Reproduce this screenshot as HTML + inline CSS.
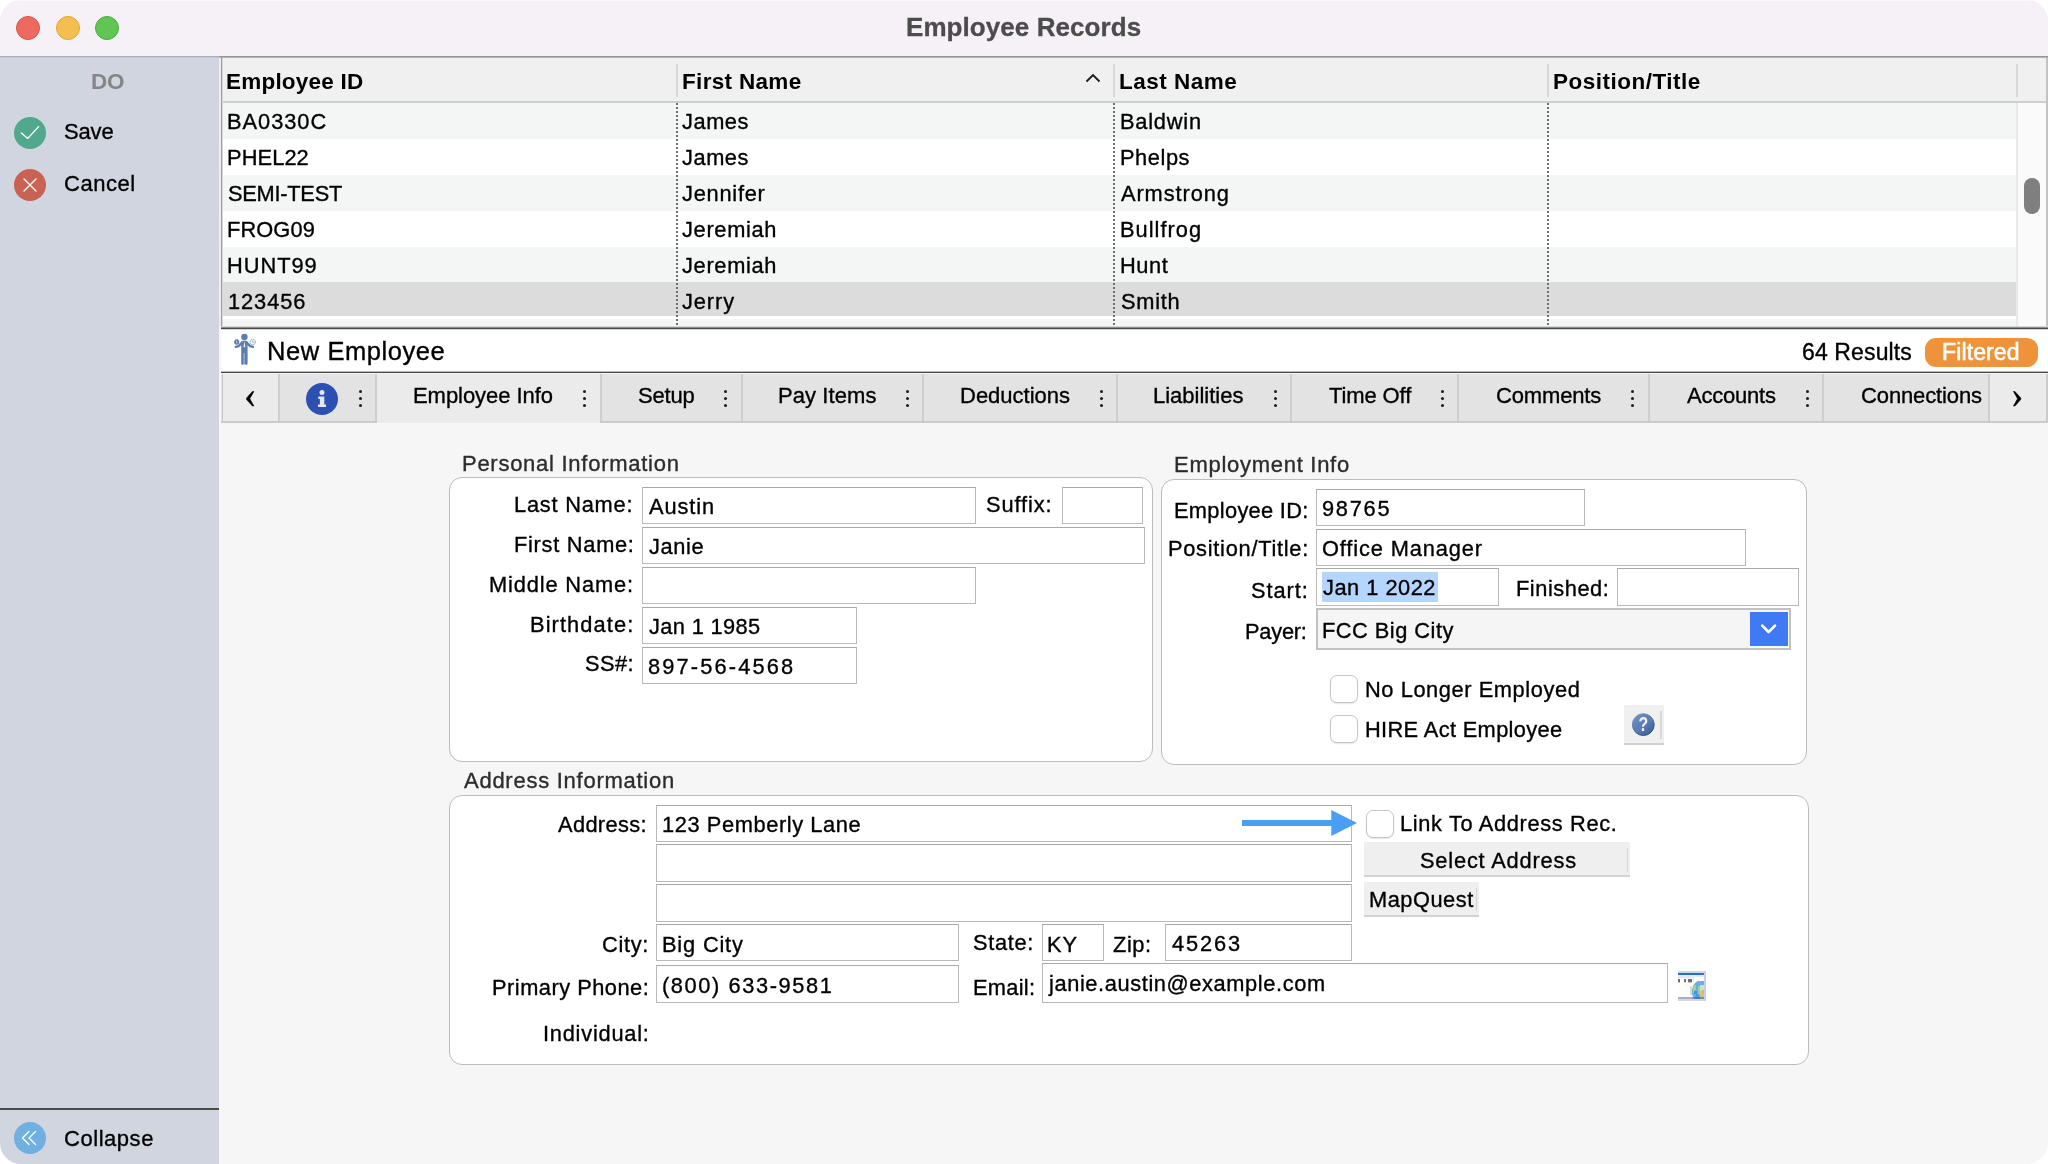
<!DOCTYPE html>
<html>
<head>
<meta charset="utf-8">
<title>Employee Records</title>
<style>
html,body{margin:0;padding:0;background:#fff;}
body{width:2048px;height:1164px;overflow:hidden;position:relative;font-family:"Liberation Sans",sans-serif;color:#000;}
#win{position:absolute;left:0;top:0;width:2048px;height:1164px;border-radius:21px;overflow:hidden;background:#f6f6f6;}
.abs{position:absolute;box-sizing:border-box;}
.t{position:absolute;white-space:nowrap;line-height:1;will-change:transform;-webkit-font-smoothing:antialiased;-webkit-text-stroke:0.35px;}
.tl{position:absolute;top:16px;width:24px;height:24px;border-radius:50%;box-sizing:border-box;}
.circ{position:absolute;width:32px;height:32px;border-radius:50%;}
.inp{position:absolute;box-sizing:border-box;border:1px solid #b9b9b9;border-top-color:#a9a9a9;background:#fff;}
.grp{position:absolute;box-sizing:border-box;border:1.5px solid #bcbcbc;border-radius:13px;background:#fff;}
.cb{position:absolute;box-sizing:border-box;width:28px;height:28px;border:1px solid #c6c6c6;border-radius:7px;background:#fff;box-shadow:0 1px 1.5px rgba(0,0,0,0.10);}
.btn{position:absolute;box-sizing:border-box;background:#efefef;border-bottom:2px solid #d2d2d2;}
.dots{position:absolute;width:3px;height:3px;background:#1e1e1e;border-radius:50%;box-shadow:0 7px 0 #1e1e1e,0 14px 0 #1e1e1e;top:390px;}
.tabb{position:absolute;top:374px;width:2px;height:47px;background:#cecece;}
.vdot{position:absolute;top:103px;width:0;height:222px;border-left:2px dotted #707070;}
.hsep{position:absolute;top:64px;width:2px;height:33px;background:#d8d8d8;}
</style>
</head>
<body>
<div id="win">
<div class="abs" style="left:0px;top:0px;width:2048px;height:56px;background:#f6f1f7;border-top:1px solid #fbf9fb;"></div>
<div class="tl" style="left:16px;background:#ec6a5f;border:1px solid #d9574c;"></div>
<div class="tl" style="left:56px;background:#f5bf4f;border:1px solid #dca73a;"></div>
<div class="tl" style="left:95px;background:#61c554;border:1px solid #4eaa41;"></div>
<div class="t" style="left:905.67px;top:14.00px;font-size:26px;letter-spacing:0.07px;font-weight:bold;-webkit-text-stroke:0;color:#4c4c4c;-webkit-text-stroke:0.3px;">Employee Records</div>
<div class="abs" style="left:0px;top:56px;width:2048px;height:1px;background:#959595;"></div>
<div class="abs" style="left:0px;top:57px;width:2048px;height:1px;background:#b4b4b4;"></div>
<div class="abs" style="left:0px;top:56px;width:219px;height:1.5px;background:#adb0ba;"></div>
<div class="abs" style="left:0px;top:57px;width:219px;height:1px;background:#c4c8d2;"></div>
<div class="abs" style="left:0px;top:58px;width:219px;height:1106px;background:#d1d5df;"></div>
<div class="abs" style="left:219px;top:58px;width:2px;height:270px;background:#eeeeee;"></div>
<div class="t" style="left:91.10px;top:71.00px;font-size:22.5px;letter-spacing:-0.27px;font-weight:bold;-webkit-text-stroke:0;color:#858585;">DO</div>
<div class="circ" style="left:14px;top:117px;background:#52a88c;"><svg width="32" height="32" viewBox="0 0 32 32"><path d="M7.4 16 L13.8 21.4 L24.6 9.6" fill="none" stroke="#fff" stroke-width="1.35" stroke-linecap="round" stroke-linejoin="round"/></svg></div>
<div class="t" style="left:63.80px;top:121.00px;font-size:22px;letter-spacing:-0.15px;">Save</div>
<div class="circ" style="left:14px;top:169px;background:#c96253;"><svg width="32" height="32" viewBox="0 0 32 32"><path d="M10 10 L22 22 M22 10 L10 22" fill="none" stroke="#fff" stroke-width="1.35" stroke-linecap="round"/></svg></div>
<div class="t" style="left:63.80px;top:173.00px;font-size:22px;letter-spacing:0.53px;">Cancel</div>
<div class="abs" style="left:0px;top:1108px;width:219px;height:2px;background:#4a4a4a;"></div>
<div class="circ" style="left:14px;top:1122px;background:#6fb0e0;"><svg width="32" height="32" viewBox="0 0 32 32"><path d="M15 9.5 L8.5 16 L15 22.5 M21.5 9.5 L15 16 L21.5 22.5" fill="none" stroke="#fff" stroke-width="1.25" stroke-linecap="round" stroke-linejoin="round"/></svg></div>
<div class="t" style="left:63.80px;top:1128.00px;font-size:22px;letter-spacing:0.54px;">Collapse</div>
<div class="abs" style="left:221px;top:58px;width:1827px;height:270px;background:#fff;"></div>
<div class="abs" style="left:221px;top:58px;width:1827px;height:45px;background:#f0f0f0;border-bottom:2px solid #cfcfcf;"></div>
<div class="abs" style="left:222px;top:103px;width:1794px;height:36px;background:#f4f5f5;"></div>
<div class="abs" style="left:222px;top:175px;width:1794px;height:36px;background:#f4f5f5;"></div>
<div class="abs" style="left:222px;top:247px;width:1794px;height:36px;background:#f4f5f5;"></div>
<div class="abs" style="left:222px;top:282px;width:1794px;height:34px;background:#dcdcdc;"></div>
<div class="abs" style="left:222px;top:319px;width:1794px;height:8px;background:#f4f5f5;"></div>
<div class="abs" style="left:2016px;top:103px;width:30px;height:225px;background:#fafafa;border-left:2px solid #e9e9e9;"></div>
<div class="abs" style="left:2024px;top:177.5px;width:16px;height:36.0px;background:#7f7f7f;border-radius:8px;"></div>
<div class="abs" style="left:221px;top:58px;width:1px;height:270px;background:#9d9d9d;"></div>
<div class="abs" style="left:222px;top:58px;width:1px;height:270px;background:#d9d9d9;"></div>
<div class="abs" style="left:2046px;top:58px;width:2px;height:270px;background:#c2c2c2;"></div>
<div class="vdot" style="left:676px;"></div>
<div class="vdot" style="left:1113px;"></div>
<div class="vdot" style="left:1547px;"></div>
<div class="hsep" style="left:676px;"></div>
<div class="hsep" style="left:1113px;"></div>
<div class="hsep" style="left:1547px;"></div>
<div class="hsep" style="left:2016px;"></div>
<svg class="abs" style="left:1084px;top:72px;" width="18" height="12" viewBox="0 0 18 12"><path d="M2.5 9.5 L9 3 L15.5 9.5" fill="none" stroke="#1a1a1a" stroke-width="1.8"/></svg>
<div class="t" style="left:226.10px;top:71.00px;font-size:22.5px;letter-spacing:0.21px;font-weight:bold;-webkit-text-stroke:0;">Employee ID</div>
<div class="t" style="left:682.10px;top:71.00px;font-size:22.5px;letter-spacing:0.32px;font-weight:bold;-webkit-text-stroke:0;">First Name</div>
<div class="t" style="left:1119.00px;top:71.00px;font-size:22.5px;letter-spacing:0.50px;font-weight:bold;-webkit-text-stroke:0;">Last Name</div>
<div class="t" style="left:1553.00px;top:71.00px;font-size:22.5px;letter-spacing:0.49px;font-weight:bold;-webkit-text-stroke:0;">Position/Title</div>
<div class="t" style="left:226.75px;top:111.00px;font-size:21.8px;letter-spacing:0.98px;">BA0330C</div>
<div class="t" style="left:682.35px;top:111.00px;font-size:21.8px;letter-spacing:0.56px;">James</div>
<div class="t" style="left:1119.75px;top:111.00px;font-size:21.8px;letter-spacing:0.78px;">Baldwin</div>
<div class="t" style="left:226.75px;top:147.00px;font-size:21.8px;letter-spacing:0.11px;">PHEL22</div>
<div class="t" style="left:682.35px;top:147.00px;font-size:21.8px;letter-spacing:0.56px;">James</div>
<div class="t" style="left:1119.75px;top:147.00px;font-size:21.8px;letter-spacing:0.57px;">Phelps</div>
<div class="t" style="left:227.62px;top:183.00px;font-size:21.8px;letter-spacing:-0.25px;">SEMI-TEST</div>
<div class="t" style="left:682.35px;top:183.00px;font-size:21.8px;letter-spacing:0.76px;">Jennifer</div>
<div class="t" style="left:1121.00px;top:183.00px;font-size:21.8px;letter-spacing:0.91px;">Armstrong</div>
<div class="t" style="left:226.75px;top:219.00px;font-size:21.8px;letter-spacing:0.11px;">FROG09</div>
<div class="t" style="left:682.35px;top:219.00px;font-size:21.8px;letter-spacing:0.69px;">Jeremiah</div>
<div class="t" style="left:1119.75px;top:219.00px;font-size:21.8px;letter-spacing:1.03px;">Bullfrog</div>
<div class="t" style="left:226.85px;top:255.00px;font-size:21.8px;letter-spacing:0.99px;">HUNT99</div>
<div class="t" style="left:682.35px;top:255.00px;font-size:21.8px;letter-spacing:0.69px;">Jeremiah</div>
<div class="t" style="left:1119.75px;top:255.00px;font-size:21.8px;letter-spacing:0.59px;">Hunt</div>
<div class="t" style="left:227.87px;top:291.00px;font-size:21.8px;letter-spacing:0.94px;">123456</div>
<div class="t" style="left:682.35px;top:291.00px;font-size:21.8px;letter-spacing:0.92px;">Jerry</div>
<div class="t" style="left:1120.62px;top:291.00px;font-size:21.8px;letter-spacing:0.75px;">Smith</div>
<div class="abs" style="left:221px;top:326px;width:1827px;height:1px;background:#d8d8d8;"></div>
<div class="abs" style="left:221px;top:327px;width:1827px;height:1px;background:#8c8c8c;"></div>
<div class="abs" style="left:221px;top:328px;width:1827px;height:1px;background:#4a4a4a;"></div>
<div class="abs" style="left:221px;top:329px;width:1827px;height:1px;background:#d4d4d4;"></div>
<div class="abs" style="left:221px;top:330px;width:1827px;height:41px;background:#fff;"></div>
<svg class="abs" style="left:232px;top:332px;" width="26" height="34" viewBox="0 0 26 34"><circle cx="12.4" cy="4.9" r="3.25" fill="#5d7eac"/><path d="M10.6 10.2 L6.6 14.2 L3.9 14.9 M14.2 10.2 L18.2 14.2 L20.9 14.9" fill="none" stroke="#5d7eac" stroke-width="2.4" stroke-linecap="round" stroke-linejoin="round"/><path d="M9.2 11 Q9.2 8.7 11 8.7 L13.8 8.7 Q15.6 8.7 15.6 11 L15.6 31.6 Q15.6 32.9 14.3 32.9 Q13 32.9 13 31.6 L13 21.5 L11.8 21.5 L11.8 31.6 Q11.8 32.9 10.5 32.9 Q9.2 32.9 9.2 31.6 Z" fill="#5d7eac"/><rect x="11.8" y="21.5" width="1.2" height="11" fill="#8da3c6"/><path d="M12.4 9.3 L13.15 14.2 L12.4 15.8 L11.65 14.2 Z" fill="#fff"/><circle cx="4.7" cy="10.1" r="2.6" fill="#5d7eac"/><path d="M3.2 6.6 L4.7 8 L6.2 6.6 L5.4 8.4 L4 8.4 Z" fill="#5d7eac"/><path d="M4.9 8.8 Q3.9 10 4.9 11.4" fill="none" stroke="#dfe6f1" stroke-width="0.8"/><circle cx="20.7" cy="10.1" r="2.7" fill="#f3f6fb" stroke="#7f9bc6" stroke-width="0.9" stroke-dasharray="1.6 0.5"/><path d="M20.7 8.7 L20.7 10.3 L21.7 10.3" fill="none" stroke="#7f9bc6" stroke-width="0.7"/></svg>
<div class="t" style="left:267.10px;top:339.00px;font-size:25.5px;letter-spacing:0.57px;">New Employee</div>
<div class="t" style="left:1801.58px;top:341.00px;font-size:23px;letter-spacing:0.13px;">64 Results</div>
<div class="abs" style="left:1925px;top:338px;width:113px;height:29px;background:#ef933a;border-radius:11px;"></div>
<div class="t" style="left:1941.53px;top:341.00px;font-size:23px;letter-spacing:0.12px;color:#fff;-webkit-text-stroke:0.6px;">Filtered</div>
<div class="abs" style="left:221px;top:371px;width:1827px;height:1px;background:#b8b8b8;"></div>
<div class="abs" style="left:221px;top:372px;width:1827px;height:1px;background:#484848;"></div>
<div class="abs" style="left:221px;top:373.5px;width:1827px;height:49.5px;background:#e3e3e3;border-bottom:2px solid #cbcbcb;"></div>
<div class="abs" style="left:222px;top:373.5px;width:57px;height:47.5px;background:#ebebeb;border-left:1px solid #c6c6c6;"></div>
<div class="abs" style="left:377px;top:373.5px;width:223px;height:49.5px;background:#ebebeb;"></div>
<div class="abs" style="left:1989px;top:373.5px;width:59px;height:47.5px;background:#ebebeb;border-right:2px solid #cbcbcb;"></div>
<div class="tabb" style="left:278px;"></div>
<div class="tabb" style="left:375px;"></div>
<div class="tabb" style="left:600px;"></div>
<div class="tabb" style="left:741px;"></div>
<div class="tabb" style="left:922px;"></div>
<div class="tabb" style="left:1116px;"></div>
<div class="tabb" style="left:1290px;"></div>
<div class="tabb" style="left:1457px;"></div>
<div class="tabb" style="left:1648px;"></div>
<div class="tabb" style="left:1822px;"></div>
<div class="tabb" style="left:1988px;"></div>
<div class="t" style="left:244.4px;top:376.4px;font-size:37px;font-family:'Liberation Serif',serif;-webkit-text-stroke:0.45px;">‹</div>
<div class="t" style="left:2011.3px;top:376.4px;font-size:37px;font-family:'Liberation Serif',serif;-webkit-text-stroke:0.45px;">›</div>
<svg class="abs" style="left:306px;top:383px;" width="32" height="32" viewBox="0 0 32 32"><circle cx="16" cy="16" r="16" fill="#2b50b1"/><circle cx="16" cy="9.6" r="2.5" fill="#e6e6e6"/><path d="M12.3 13.6 L18.3 13.6 L18.3 21.6 L20 21.6 L20 24 L12 24 L12 21.6 L13.9 21.6 L13.9 15.9 L12.3 15.9 Z" fill="#e6e6e6"/></svg>
<div class="dots" style="left:358.5px;"></div>
<div class="dots" style="left:582.5px;"></div>
<div class="dots" style="left:724.2px;"></div>
<div class="dots" style="left:905.9px;"></div>
<div class="dots" style="left:1099.5px;"></div>
<div class="dots" style="left:1273.5px;"></div>
<div class="dots" style="left:1440.5px;"></div>
<div class="dots" style="left:1630.5px;"></div>
<div class="dots" style="left:1805.5px;"></div>
<div class="t" style="left:412.85px;top:385.00px;font-size:22px;letter-spacing:-0.05px;">Employee Info</div>
<div class="t" style="left:637.50px;top:385.00px;font-size:22px;letter-spacing:-0.16px;">Setup</div>
<div class="t" style="left:777.75px;top:385.00px;font-size:22px;letter-spacing:0.08px;">Pay Items</div>
<div class="t" style="left:959.75px;top:385.00px;font-size:22px;letter-spacing:-0.01px;">Deductions</div>
<div class="t" style="left:1153.25px;top:385.00px;font-size:22px;">Liabilities</div>
<div class="t" style="left:1328.62px;top:385.00px;font-size:22px;letter-spacing:-0.12px;">Time Off</div>
<div class="t" style="left:1496.00px;top:385.00px;font-size:22px;letter-spacing:-0.16px;">Comments</div>
<div class="t" style="left:1687.20px;top:385.00px;font-size:22px;letter-spacing:-0.21px;">Accounts</div>
<div class="t" style="left:1860.70px;top:385.00px;font-size:22px;letter-spacing:-0.12px;">Connections</div>
<div class="t" style="left:462.35px;top:453.00px;font-size:22px;letter-spacing:0.73px;color:#2c2c2c;">Personal Information</div>
<div class="t" style="left:1174.15px;top:454.00px;font-size:22px;letter-spacing:0.72px;color:#2c2c2c;">Employment Info</div>
<div class="t" style="left:463.90px;top:770.00px;font-size:22px;letter-spacing:0.74px;color:#2c2c2c;">Address Information</div>
<div class="grp" style="left:449px;top:476.5px;width:704px;height:285.5px;"></div>
<div class="grp" style="left:1161px;top:478.5px;width:646px;height:286px;"></div>
<div class="grp" style="left:449px;top:794.5px;width:1360px;height:270px;"></div>
<div class="inp" style="left:642px;top:487px;width:334px;height:37px;"></div>
<div class="inp" style="left:1062px;top:487px;width:81px;height:37px;"></div>
<div class="inp" style="left:642px;top:527px;width:503px;height:37px;"></div>
<div class="inp" style="left:642px;top:567px;width:334px;height:37px;"></div>
<div class="inp" style="left:642px;top:607px;width:215px;height:37px;"></div>
<div class="inp" style="left:642px;top:647px;width:215px;height:37px;"></div>
<div class="t" style="left:514.45px;top:494.00px;font-size:21.8px;letter-spacing:0.78px;">Last Name:</div>
<div class="t" style="left:514.45px;top:534.00px;font-size:21.8px;letter-spacing:0.73px;">First Name:</div>
<div class="t" style="left:488.85px;top:574.00px;font-size:21.8px;letter-spacing:0.87px;">Middle Name:</div>
<div class="t" style="left:530.25px;top:614.00px;font-size:21.8px;letter-spacing:1.10px;">Birthdate:</div>
<div class="t" style="left:584.72px;top:653.00px;font-size:21.8px;letter-spacing:0.47px;">SS#:</div>
<div class="t" style="left:986.12px;top:494.00px;font-size:21.8px;letter-spacing:0.90px;">Suffix:</div>
<div class="t" style="left:648.80px;top:496.00px;font-size:21.8px;letter-spacing:0.89px;">Austin</div>
<div class="t" style="left:648.55px;top:536.00px;font-size:21.8px;letter-spacing:0.65px;">Janie</div>
<div class="t" style="left:648.55px;top:616.00px;font-size:21.8px;letter-spacing:0.37px;">Jan 1 1985</div>
<div class="t" style="left:647.92px;top:656.00px;font-size:21.8px;letter-spacing:2.15px;">897-56-4568</div>
<div class="inp" style="left:1316px;top:489px;width:269px;height:37px;"></div>
<div class="inp" style="left:1316px;top:528.5px;width:430px;height:37.0px;"></div>
<div class="inp" style="left:1316px;top:568px;width:183px;height:37.5px;"></div>
<div class="inp" style="left:1616.5px;top:568px;width:182.5px;height:37.5px;"></div>
<div class="abs" style="left:1316px;top:608px;width:475px;height:42px;background:#f5f5f5;border:2px solid #c1c1c1;"></div>
<div class="abs" style="left:1750px;top:612px;width:39px;height:36px;background:#fdfdf8;"></div>
<div class="abs" style="left:1750px;top:612px;width:38px;height:34px;background:#3f79f3;"><svg width="38" height="34" viewBox="0 0 38 34" style="display:block"><path d="M12.2 13.6 L18.6 20 L25 13.6" fill="none" stroke="#fff" stroke-width="2.7" stroke-linecap="round" stroke-linejoin="round"/></svg></div>
<div class="t" style="left:1173.75px;top:500.00px;font-size:21.8px;letter-spacing:0.32px;">Employee ID:</div>
<div class="t" style="left:1168.15px;top:538.00px;font-size:21.8px;letter-spacing:0.73px;">Position/Title:</div>
<div class="t" style="left:1250.82px;top:580.00px;font-size:21.8px;letter-spacing:0.93px;">Start:</div>
<div class="t" style="left:1245.45px;top:621.00px;font-size:21.8px;letter-spacing:-0.22px;">Payer:</div>
<div class="t" style="left:1515.75px;top:578.00px;font-size:21.8px;letter-spacing:0.55px;">Finished:</div>
<div class="t" style="left:1322.30px;top:498.00px;font-size:21.8px;letter-spacing:1.74px;">98765</div>
<div class="t" style="left:1322.30px;top:538.00px;font-size:21.8px;letter-spacing:0.87px;">Office Manager</div>
<div class="abs" style="left:1322px;top:572px;width:116px;height:30px;background:#b4d5fe;"></div>
<div class="t" style="left:1323.05px;top:577.00px;font-size:21.8px;letter-spacing:0.51px;">Jan 1 2022</div>
<div class="t" style="left:1321.55px;top:620.00px;font-size:21.8px;letter-spacing:0.49px;">FCC Big City</div>
<div class="cb" style="left:1330px;top:675px;"></div>
<div class="cb" style="left:1330px;top:715px;"></div>
<div class="t" style="left:1365.05px;top:679.00px;font-size:21.8px;letter-spacing:0.59px;">No Longer Employed</div>
<div class="t" style="left:1365.05px;top:719.00px;font-size:21.8px;letter-spacing:0.36px;">HIRE Act Employee</div>
<div class="abs" style="left:1624px;top:705px;width:40px;height:40px;background:#f0f0f0;border-bottom:2px solid #d0d0d0;"></div>
<div class="abs" style="left:1660px;top:711px;width:2px;height:28px;background:#d9d9d9;"></div>
<svg class="abs" style="left:1630px;top:711px;will-change:transform;" width="28" height="28" viewBox="0 0 28 28"><defs><linearGradient id="hg" x1="0.15" y1="0.1" x2="0.85" y2="0.95"><stop offset="0" stop-color="#6a8dc2"/><stop offset="0.55" stop-color="#587bb3"/><stop offset="1" stop-color="#3e5f98"/></linearGradient><linearGradient id="hs" x1="0.2" y1="0" x2="0.8" y2="1"><stop offset="0" stop-color="#7d9ccc"/><stop offset="1" stop-color="#263f6e"/></linearGradient></defs><circle cx="13.3" cy="13.6" r="10.9" fill="url(#hg)" stroke="url(#hs)" stroke-width="1"/><text x="13.4" y="20.4" text-anchor="middle" font-family="Liberation Sans, sans-serif" font-weight="bold" font-size="19.5" fill="#f4f2ec" transform="translate(2.55,0) scale(0.81,1)">?</text></svg>
<div class="inp" style="left:656px;top:805px;width:696px;height:37px;"></div>
<div class="inp" style="left:656px;top:844px;width:696px;height:38px;"></div>
<div class="inp" style="left:656px;top:884px;width:696px;height:37.5px;"></div>
<div class="inp" style="left:656px;top:924px;width:302.5px;height:37px;"></div>
<div class="inp" style="left:1042px;top:924px;width:62px;height:37px;"></div>
<div class="inp" style="left:1165px;top:924px;width:187px;height:37px;"></div>
<div class="inp" style="left:656px;top:965px;width:302.5px;height:37.5px;"></div>
<div class="inp" style="left:1042px;top:963px;width:626px;height:40px;"></div>
<div class="t" style="left:557.60px;top:814.00px;font-size:21.8px;letter-spacing:0.36px;">Address:</div>
<div class="t" style="left:601.60px;top:934.00px;font-size:21.8px;letter-spacing:0.67px;">City:</div>
<div class="t" style="left:491.85px;top:977.00px;font-size:21.8px;letter-spacing:0.50px;">Primary Phone:</div>
<div class="t" style="left:542.60px;top:1023.00px;font-size:21.8px;letter-spacing:0.77px;">Individual:</div>
<div class="t" style="left:973.42px;top:932.00px;font-size:21.8px;letter-spacing:0.66px;">State:</div>
<div class="t" style="left:1113.27px;top:934.00px;font-size:21.8px;letter-spacing:0.59px;">Zip:</div>
<div class="t" style="left:972.55px;top:977.00px;font-size:21.8px;letter-spacing:0.30px;">Email:</div>
<div class="t" style="left:661.67px;top:814.00px;font-size:21.8px;letter-spacing:0.60px;">123 Pemberly Lane</div>
<div class="t" style="left:661.55px;top:934.00px;font-size:21.8px;letter-spacing:0.83px;">Big City</div>
<div class="t" style="left:662.05px;top:975.00px;font-size:21.8px;letter-spacing:1.60px;">(800) 633-9581</div>
<div class="t" style="left:1047.25px;top:934.00px;font-size:21.8px;letter-spacing:1.06px;">KY</div>
<div class="t" style="left:1171.70px;top:933.00px;font-size:21.8px;letter-spacing:1.88px;">45263</div>
<div class="t" style="left:1048.63px;top:973.00px;font-size:21.8px;letter-spacing:0.61px;">janie.austin@example.com</div>
<svg class="abs" style="left:1240px;top:808px;" width="120" height="30" viewBox="0 0 120 30"><path d="M2 12 L91.3 12 L91.3 2 L117 15 L91.3 28 L91.3 18 L2 18 Z" fill="#4a9ef3"/></svg>
<div class="cb" style="left:1366px;top:810px;"></div>
<div class="t" style="left:1400.45px;top:813.00px;font-size:21.8px;letter-spacing:0.66px;">Link To Address Rec.</div>
<div class="abs" style="left:1364px;top:842px;width:266px;height:35px;background:#efefef;border-bottom:2px solid #d2d2d2;"></div>
<div class="abs" style="left:1626.5px;top:848px;width:1.5px;height:24px;background:#d6d6d6;"></div>
<div class="t" style="left:1420.12px;top:850.00px;font-size:21.8px;letter-spacing:0.82px;">Select Address</div>
<div class="abs" style="left:1364px;top:882px;width:115px;height:35px;background:#efefef;border-bottom:2px solid #d2d2d2;"></div>
<div class="abs" style="left:1475.5px;top:888px;width:1.5px;height:23px;background:#d6d6d6;"></div>
<div class="t" style="left:1369.05px;top:889.00px;font-size:21.8px;letter-spacing:0.52px;">MapQuest</div>
<svg class="abs" style="left:1678px;top:971px;" width="28" height="30" viewBox="0 0 28 30" shape-rendering="crispEdges"><rect x="0" y="0" width="28" height="30" fill="#fdfdfb"/><rect x="0" y="0" width="28" height="2" fill="#ccd6f6"/><rect x="0" y="2" width="26" height="2.2" fill="#2a6bd0"/><rect x="24" y="2" width="2" height="2.2" fill="#7a55a8"/><rect x="0" y="4.2" width="26" height="1.6" fill="#e4ecf1"/><rect x="0" y="6.3" width="15.5" height="0.6" fill="#e2e2e2"/><rect x="15.3" y="6.3" width="0.6" height="5" fill="#e2e2e2"/><rect x="0" y="8" width="2" height="3" fill="#6c6c6c"/><rect x="5.5" y="8" width="2.6" height="3" fill="#747474"/><rect x="10" y="8" width="4" height="3" fill="#6e6e6e"/><rect x="0" y="11" width="2" height="1" fill="#c9c9c9"/><rect x="5.5" y="11" width="2.6" height="1" fill="#d0d0d0"/><rect x="10" y="11" width="4" height="1" fill="#c9c9c9"/><path d="M26 10 L20 10 L17 12 L15 15 L14 19 L14 23 L15 26 L26 26 Z" fill="#63b0e2" shape-rendering="auto"/><rect x="19" y="10" width="5" height="2" fill="#8fa6d4"/><rect x="15" y="14" width="3" height="5" fill="#9ccf9a"/><rect x="14.5" y="18" width="2.5" height="4" fill="#b8c878"/><rect x="20" y="15" width="3" height="9" fill="#9ccfa0"/><rect x="22" y="14" width="4" height="6" fill="#c6e6c4"/><rect x="22" y="20" width="4" height="6" fill="#d6c57e"/><rect x="23.5" y="19" width="2.5" height="4" fill="#e0b074"/><rect x="16" y="20" width="3" height="3" fill="#3f94dc"/><rect x="18" y="23" width="3" height="3" fill="#4a9de0"/><rect x="12.3" y="15" width="1.2" height="9" fill="#dcdcd4"/><rect x="0" y="26" width="26" height="2" fill="#a9acd3"/><rect x="14" y="26" width="2" height="2" fill="#8f8fc4"/><rect x="16" y="26" width="6" height="2" fill="#3d7fcf"/><rect x="22" y="26" width="4" height="2" fill="#8a8a8a"/><rect x="0" y="28" width="26" height="2" fill="#d7d7de"/><rect x="26" y="0" width="2" height="30" fill="#c4cef4"/></svg>
</div>
</body>
</html>
